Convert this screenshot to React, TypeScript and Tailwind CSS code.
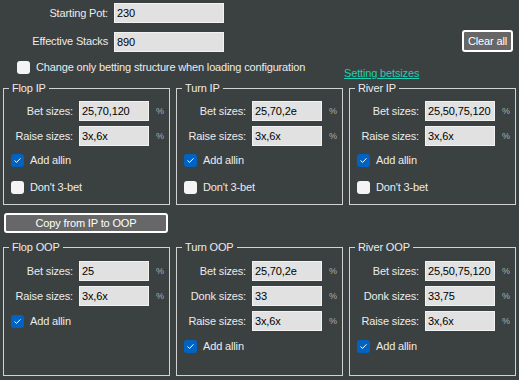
import React from "react";

const font = { fontFamily: '"Liberation Sans", Arial, sans-serif' };

function Check({ checked }: { checked: boolean }) {
  if (checked) {
    return (
      <span className="flex w-[13px] h-[13px] shrink-0 items-center justify-center rounded-[3px] bg-[#0063c4]">
        <svg width="9" height="9" viewBox="0 0 9 9" fill="none">
          <path d="M1.8 4.8 L3.6 6.4 L7.2 2.6" stroke="#ffffff" strokeWidth="1" strokeLinecap="round" strokeLinejoin="round" />
        </svg>
      </span>
    );
  }
  return <span className="block w-[13px] h-[13px] shrink-0 rounded-[3px] bg-[#f4f4f4]" />;
}

function SizeRow({ label, value, first }: { label: string; value: string; first?: boolean }) {
  return (
    <div className={`flex items-center ${first ? "" : "mt-[5px]"}`}>
      <span className="w-[69px] text-right text-[11px] text-[#ececec] leading-[14px]">{label}</span>
      <div className="ml-[6px] flex h-[20px] w-[70px] items-center border border-[#f2f2f2] bg-[#e1e1e1] pl-[2px] text-[11px] text-black leading-[14px]">
        {value}
      </div>
      <span className="ml-[7px] text-[9px] text-[#a8b0b4] leading-[12px]">%</span>
    </div>
  );
}

function CheckRow({ label, checked, className }: { label: string; checked: boolean; className: string }) {
  return (
    <div className={`flex items-center ml-[7px] ${className}`}>
      <Check checked={checked} />
      <span className="ml-[6px] text-[11px] text-[#ececec] leading-[13px]">{label}</span>
    </div>
  );
}

function Group({ title, height, padTop, children }: { title: string; height: string; padTop: string; children: React.ReactNode }) {
  return (
    <div className={`relative border border-[#d2d2d2] ${height} ${padTop}`}>
      <span className="absolute -top-[8px] left-[5px] bg-[#3b4040] px-[3px] text-[11px] leading-[14px] text-[#ececec]">
        {title}
      </span>
      {children}
    </div>
  );
}

export default function App() {
  return (
    <div className="w-[519px] h-[380px] overflow-hidden bg-[#3b4040] select-none tracking-[-0.15px]" style={font}>
      {/* top fields */}
      <div className="flex items-center pt-[3px]">
        <span className="w-[108px] text-right text-[11px] text-[#ececec] leading-[14px]">Starting Pot:</span>
        <div className="ml-[6px] flex h-[20px] w-[110px] items-center border border-[#f2f2f2] bg-[#e1e1e1] pl-[2px] text-[11px] leading-[14px] text-black">
          230
        </div>
      </div>
      <div className="mt-[7px] flex items-end pr-[6px]">
        <span className="w-[108px] self-center text-right text-[11px] text-[#ececec] leading-[14px]">Effective Stacks</span>
        <div className="ml-[6px] flex h-[20px] w-[110px] items-center border border-[#f2f2f2] bg-[#e1e1e1] pl-[2px] text-[11px] leading-[14px] text-black">
          890
        </div>
        <button className="ml-auto h-[22px] w-[51px] rounded-[3px] border-2 border-white bg-[#676767] text-[11px] leading-[14px] text-white">
          Clear all
        </button>
      </div>
      <div className="mt-[9px] flex items-start">
        <div className="flex w-[344px] items-center pl-[17px]">
          <Check checked={false} />
          <span className="ml-[6px] text-[11px] leading-[13px] text-[#ececec]">
            Change only betting structure when loading configuration
          </span>
        </div>
        <span className="mt-[5px] text-[11px] leading-[14px] text-[#1ccfb3] underline">Setting betsizes</span>
      </div>

      {/* IP groups */}
      <div className="ml-[3px] mt-[8px] grid grid-cols-[167px_167px_167px] gap-x-[6px]">
        <Group title="Flop IP" height="h-[117px]" padTop="pt-[12px]">
          <SizeRow label="Bet sizes:" value="25,70,120" first />
          <SizeRow label="Raise sizes:" value="3x,6x" />
          <CheckRow label="Add allin" checked className="mt-[8px]" />
          <CheckRow label="Don't 3-bet" checked={false} className="mt-[14px]" />
        </Group>
        <Group title="Turn IP" height="h-[117px]" padTop="pt-[12px]">
          <SizeRow label="Bet sizes:" value="25,70,2e" first />
          <SizeRow label="Raise sizes:" value="3x,6x" />
          <CheckRow label="Add allin" checked className="mt-[8px]" />
          <CheckRow label="Don't 3-bet" checked={false} className="mt-[14px]" />
        </Group>
        <Group title="River IP" height="h-[117px]" padTop="pt-[12px]">
          <SizeRow label="Bet sizes:" value="25,50,75,120" first />
          <SizeRow label="Raise sizes:" value="3x,6x" />
          <CheckRow label="Add allin" checked className="mt-[8px]" />
          <CheckRow label="Don't 3-bet" checked={false} className="mt-[14px]" />
        </Group>
      </div>

      <button className="ml-[4px] mt-[8px] block h-[20px] w-[164px] rounded-[3px] border-2 border-white bg-[#676767] text-[11px] leading-[14px] text-white">
        Copy from IP to OOP
      </button>

      {/* OOP groups */}
      <div className="ml-[3px] mt-[14px] grid grid-cols-[167px_167px_167px] gap-x-[6px]">
        <Group title="Flop OOP" height="h-[129px]" padTop="pt-[13px]">
          <SizeRow label="Bet sizes:" value="25" first />
          <SizeRow label="Raise sizes:" value="3x,6x" />
          <CheckRow label="Add allin" checked className="mt-[9px]" />
        </Group>
        <Group title="Turn OOP" height="h-[129px]" padTop="pt-[13px]">
          <SizeRow label="Bet sizes:" value="25,70,2e" first />
          <SizeRow label="Donk sizes:" value="33" />
          <SizeRow label="Raise sizes:" value="3x,6x" />
          <CheckRow label="Add allin" checked className="mt-[9px]" />
        </Group>
        <Group title="River OOP" height="h-[129px]" padTop="pt-[13px]">
          <SizeRow label="Bet sizes:" value="25,50,75,120" first />
          <SizeRow label="Donk sizes:" value="33,75" />
          <SizeRow label="Raise sizes:" value="3x,6x" />
          <CheckRow label="Add allin" checked className="mt-[9px]" />
        </Group>
      </div>
    </div>
  );
}
